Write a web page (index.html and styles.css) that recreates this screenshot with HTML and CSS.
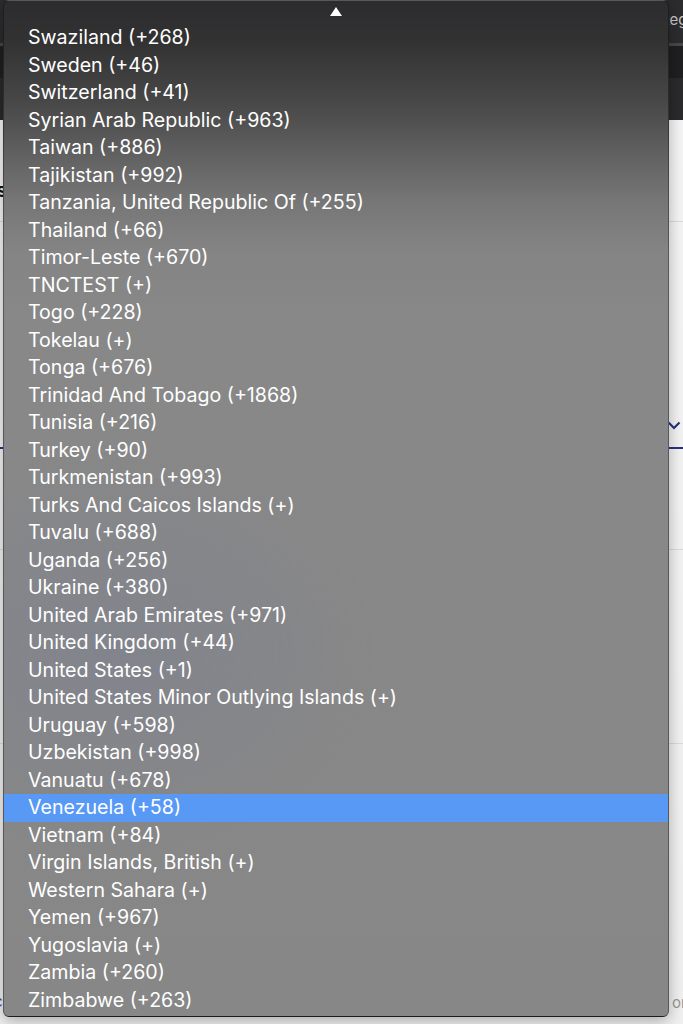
FILE: index.html
```html
<!DOCTYPE html>
<html>

<head>
    <title>Country code</title>
    <link rel="stylesheet" href="styles.css">
</head>

<body>
    <div class="topbar">
        <span class="topbar-link">Register</span>
    </div>
    <div class="topbar-rule"></div>
    <div class="subbar"></div>
    <div class="subbar-lower"></div>

    <div class="page">
        <div class="section first">
            <span class="side-mark">s</span>
        </div>
        <div class="section field">
            <span class="chevron">
                <svg width="14" height="9" viewBox="0 0 14 9"><path d="M1.5 1.5 L7 7 L12.5 1.5" fill="none" stroke="#27347e" stroke-width="2.2"/></svg>
            </span>
        </div>
        <div class="section"></div>
        <div class="section tall"></div>
        <div class="section foot">
            <span class="side-link">c</span>
            <span class="side-text">on</span>
        </div>
    </div>

    <div class="menu">
        <div class="menu-arrow"></div>
        <ul class="menu-list">
            <li>Swaziland (+268)</li>
            <li>Sweden (+46)</li>
            <li>Switzerland (+41)</li>
            <li>Syrian Arab Republic (+963)</li>
            <li>Taiwan (+886)</li>
            <li>Tajikistan (+992)</li>
            <li>Tanzania, United Republic Of (+255)</li>
            <li>Thailand (+66)</li>
            <li>Timor-Leste (+670)</li>
            <li>TNCTEST (+)</li>
            <li>Togo (+228)</li>
            <li>Tokelau (+)</li>
            <li>Tonga (+676)</li>
            <li>Trinidad And Tobago (+1868)</li>
            <li>Tunisia (+216)</li>
            <li>Turkey (+90)</li>
            <li>Turkmenistan (+993)</li>
            <li>Turks And Caicos Islands (+)</li>
            <li>Tuvalu (+688)</li>
            <li>Uganda (+256)</li>
            <li>Ukraine (+380)</li>
            <li>United Arab Emirates (+971)</li>
            <li>United Kingdom (+44)</li>
            <li>United States (+1)</li>
            <li>United States Minor Outlying Islands (+)</li>
            <li>Uruguay (+598)</li>
            <li>Uzbekistan (+998)</li>
            <li>Vanuatu (+678)</li>
            <li class="selected">Venezuela (+58)</li>
            <li>Vietnam (+84)</li>
            <li>Virgin Islands, British (+)</li>
            <li>Western Sahara (+)</li>
            <li>Yemen (+967)</li>
            <li>Yugoslavia (+)</li>
            <li>Zambia (+260)</li>
            <li>Zimbabwe (+263)</li>
        </ul>
    </div>
</body>

</html>
```

FILE: styles.css
```css
body {
    margin: 0;
    font-family: Inter, "Liberation Sans", sans-serif;
    background: #f4f4f4;
    overflow: hidden;
}

.topbar {
    height: 43px;
    background: #2c2c2e;
    padding-left: 660px;
    white-space: nowrap;
    overflow: hidden;
    line-height: 38px;
}

.topbar-link {
    color: #c8c8c8;
    font-size: 15px;
}

.topbar-rule {
    height: 3px;
    background: #48484a;
}

.subbar {
    height: 32px;
    background: #1f1f21;
}

.subbar-lower {
    height: 42px;
    background: #2a2a2c;
}

.page {
    background: linear-gradient(to bottom, #f6f6f6, #f1f1f1);
}

.section {
    height: 100px;
    border-bottom: 1px solid #dcdcdc;
    position: relative;
}

.section.first {
    height: 101px;
}

.section.field {
    height: 225px;
    border-bottom: 2px solid #27347e;
}

.section.tall {
    height: 193px;
}

.section.foot {
    height: 280px;
    border-bottom: none;
}

.side-mark {
    position: absolute;
    left: -4px;
    top: 58px;
    font-weight: bold;
    font-size: 20px;
    color: #111;
}

.chevron {
    position: absolute;
    right: 2px;
    top: 192px;
}

.side-link {
    position: absolute;
    left: -6px;
    top: 248px;
    color: #3a4a9a;
    font-size: 15px;
}

.side-text {
    position: absolute;
    left: 672px;
    top: 249px;
    color: #999;
    font-size: 15px;
}

.menu {
    position: absolute;
    left: 3px;
    top: 0;
    width: 666px;
    height: 1017px;
    box-sizing: border-box;
    border: 1px solid rgba(0, 0, 0, 0.35);
    border-radius: 6px;
    overflow: hidden;
    background:
        radial-gradient(ellipse 260px 200px at 110px 650px, rgba(110, 120, 160, 0.22), rgba(110, 120, 160, 0)),
        linear-gradient(to bottom, #2c2c2e 0px, #323233 40px, #474747 100px, #5f5f5f 150px, #767676 200px, #848484 250px, #888888 320px, #878787 100%);
    box-shadow: 0 4px 16px rgba(0, 0, 0, 0.3);
}

.menu-arrow {
    width: 0;
    height: 0;
    margin: 6px auto 0;
    border-left: 6px solid transparent;
    border-right: 6px solid transparent;
    border-bottom: 9px solid #ffffff;
}

.menu-list {
    list-style: none;
    margin: 8px 0 0;
    padding: 0;
}

.menu-list li {
    height: 27.5px;
    line-height: 27.5px;
    padding-left: 24px;
    color: #ffffff;
    font-size: 19.6px;
    white-space: nowrap;
}

.menu-list li.selected {
    background: #5899f5;
}
```
